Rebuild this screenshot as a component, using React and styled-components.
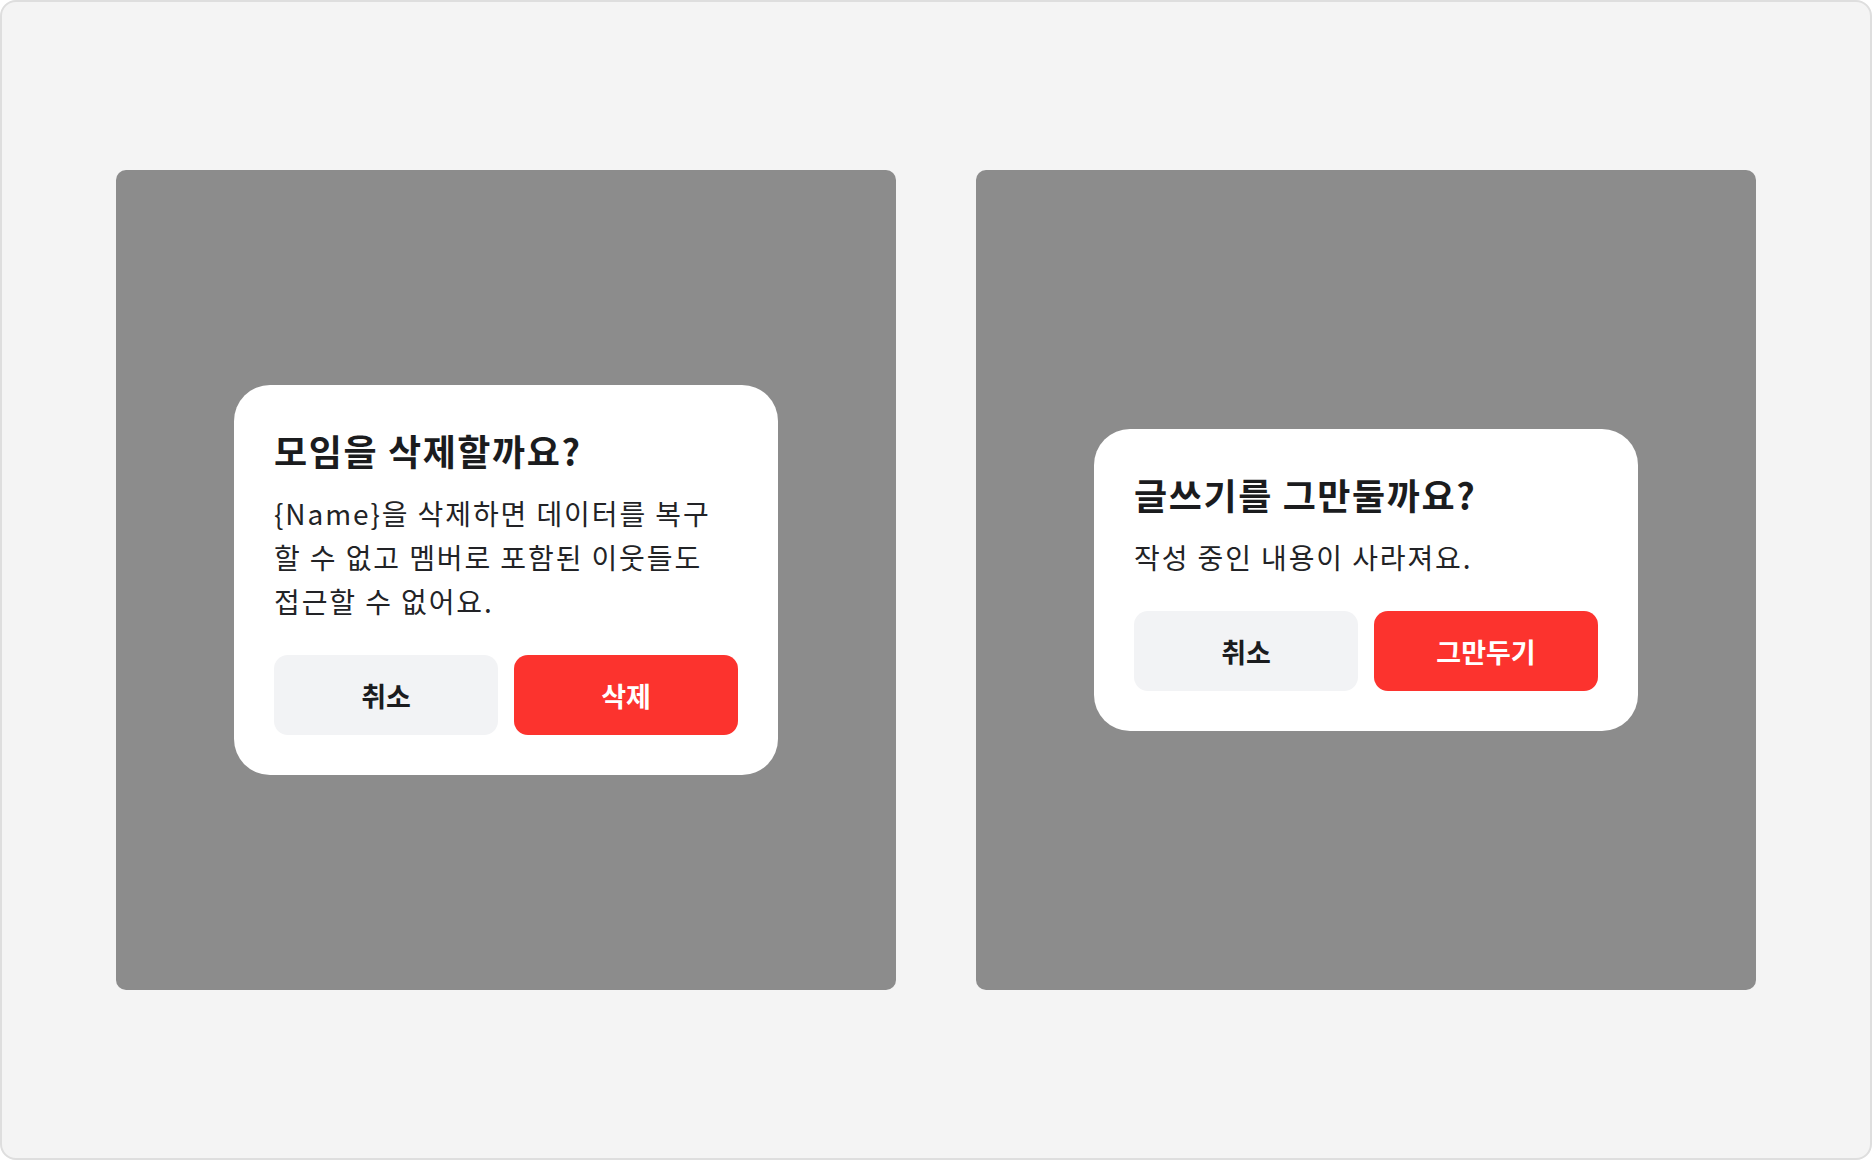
import React from 'react';
import styled, { createGlobalStyle } from 'styled-components';

const GlobalStyle = createGlobalStyle`
  html, body {
    margin: 0;
    padding: 0;
    background: #ffffff;
  }
  body {
    font-family: "Noto Sans CJK KR", "Noto Sans", sans-serif;
  }
  * {
    box-sizing: border-box;
  }
`;

const Frame = styled.div`
  width: 1872px;
  height: 1160px;
  background: #f4f4f4;
  border: 2px solid #dedede;
  border-radius: 16px;
  display: flex;
  align-items: center;
  justify-content: center;
  gap: 80px;
`;

const Backdrop = styled.div`
  width: 780px;
  height: 820px;
  background: #8c8c8c;
  border-radius: 10px;
  display: flex;
  align-items: center;
  justify-content: center;
`;

const Dialog = styled.div`
  width: 544px;
  background: #ffffff;
  border-radius: 36px;
  padding: 40px;
  display: flex;
  flex-direction: column;
`;

const Title = styled.h2`
  margin: 0;
  font-size: 36px;
  line-height: 50px;
  font-weight: 700;
  color: #1b1c1e;
  letter-spacing: 1.6px;
`;

// copy is broken by hand, like the design
const Message = styled.p`
  margin: 16px 0 0;
  font-size: 28px;
  line-height: 44px;
  font-weight: 400;
  color: #222326;
  letter-spacing: 1.9px;
  white-space: pre-line;
`;

const Actions = styled.div`
  margin-top: 32px;
  display: grid;
  grid-template-columns: 1fr 1fr;
  gap: 16px;
`;

const Button = styled.button`
  height: 80px;
  border: none;
  border-radius: 14px;
  font-family: inherit;
  font-size: 27px;
  font-weight: 700;
  cursor: pointer;
  background: ${({ danger }) => (danger ? '#fc332e' : '#f2f3f5')};
  color: ${({ danger }) => (danger ? '#ffffff' : '#1b1c1e')};
`;

const ConfirmDialog = ({ title, message, confirmLabel }) => (
  <Backdrop>
    <Dialog>
      <Title>{title}</Title>
      <Message>{message}</Message>
      <Actions>
        <Button>취소</Button>
        <Button danger>{confirmLabel}</Button>
      </Actions>
    </Dialog>
  </Backdrop>
);

const App = () => (
  <>
    <GlobalStyle />
    <Frame>
      <ConfirmDialog
        title="모임을 삭제할까요?"
        message={'{Name}을 삭제하면 데이터를 복구\n할 수 없고 멤버로 포함된 이웃들도\n접근할 수 없어요.'}
        confirmLabel="삭제"
      />
      <ConfirmDialog
        title="글쓰기를 그만둘까요?"
        message="작성 중인 내용이 사라져요."
        confirmLabel="그만두기"
      />
    </Frame>
  </>
);

export default App;
